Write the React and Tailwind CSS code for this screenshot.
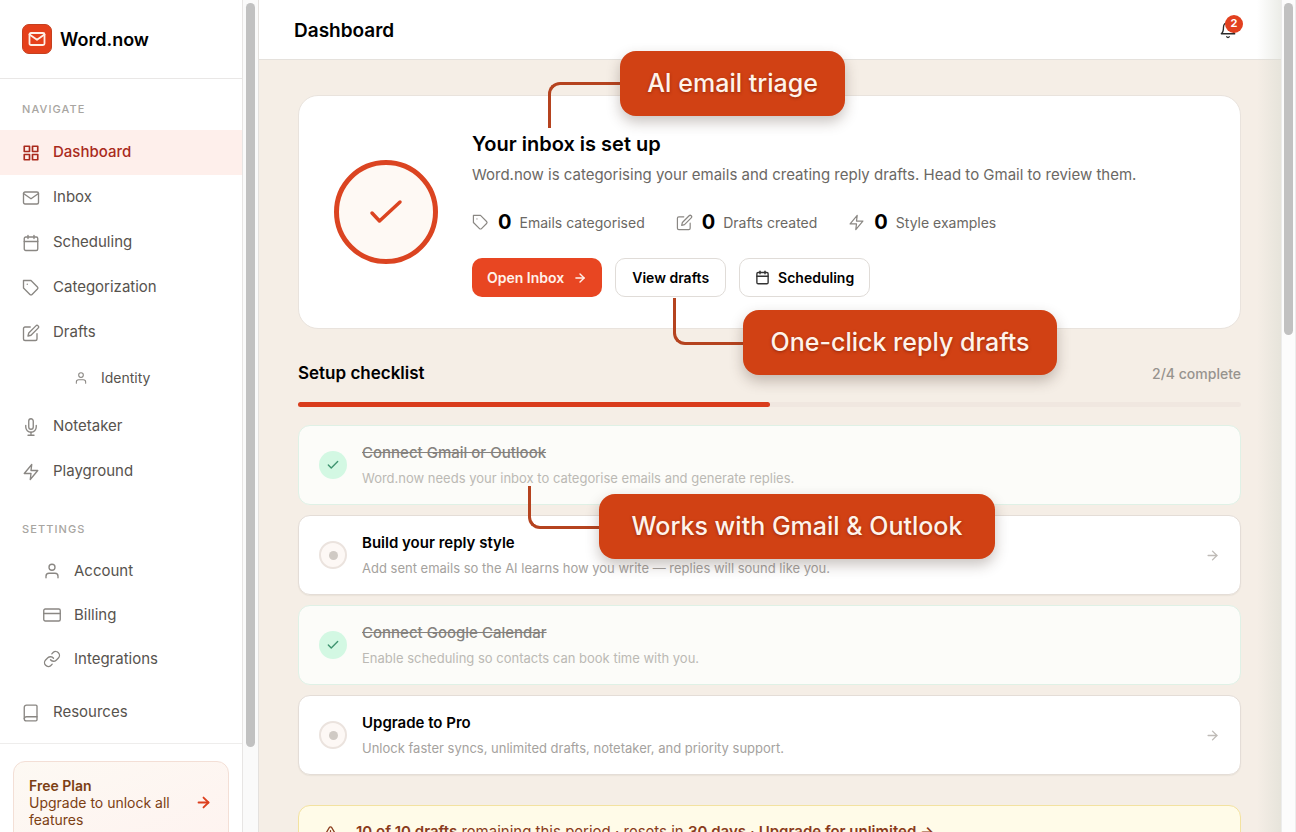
import React from "react";
import {
  FiGrid, FiMail, FiCalendar, FiTag, FiEdit, FiUser, FiMic, FiZap, FiCreditCard,
  FiLink, FiBell, FiAlertTriangle, FiArrowRight, FiCheck,
} from "react-icons/fi";

function BookIcon({ size = 18, strokeWidth = 2, className }) {
  return (
    <svg
      width={size}
      height={size}
      viewBox="0 0 24 24"
      fill="none"
      stroke="currentColor"
      strokeWidth={strokeWidth}
      strokeLinecap="round"
      strokeLinejoin="round"
      className={className}
    >
      <path d="M6 1.500h12.500a1.500 1.500 0 0 1 1.500 1.500v18a1.500 1.500 0 0 1-1.500 1.500H6A3 3 0 0 1 3 19.500v-15a3 3 0 0 1 3-3z" />
      <path d="M3 19.500A3 3 0 0 1 6 17h14" />
    </svg>
  );
}

function NavItem({ icon: Icon, label, active }) {
  return (
    <a
      href="#"
      className={
        active
          ? "flex h-[45px] items-center gap-[13px] bg-[#feefeb] px-[22px] text-[15px] font-medium text-[#a92a1c]"
          : "flex h-[45px] items-center gap-[13px] px-[22px] text-[15px] text-[#57534e]"
      }
    >
      <Icon size={18} strokeWidth={active ? 2.2 : 1.8} className={active ? "" : "text-[#8a8783]"} />
      {label}
    </a>
  );
}

function SubItem({ icon: Icon, label }) {
  return (
    <a href="#" className="flex h-11 items-center gap-[13px] pl-[43px] text-[15px] text-[#57534e]">
      <Icon size={18} strokeWidth={1.8} className="text-[#8a8783]" />
      {label}
    </a>
  );
}

function Stat({ icon: Icon, value, label }) {
  return (
    <div className="flex items-center">
      <Icon size={17} strokeWidth={1.7} className="text-[#8a8783]" />
      <span className="ml-[9px] text-[20px] font-bold text-black">{value}</span>
      <span className="ml-2 text-[14px] text-[#6b6864]">{label}</span>
    </div>
  );
}

function Callout({ children, box, line }) {
  return (
    <>
      <div className={`absolute z-20 border-[#b5431f] ${line}`} />
      <div
        className={`absolute z-20 flex h-[65px] items-center justify-center rounded-2xl bg-[#d14114] text-[25px] font-medium whitespace-nowrap text-[#fff3ea] shadow-[0_6px_14px_rgba(60,40,30,0.28)] ${box}`}
      >
        <span className="[text-shadow:0_1px_3px_rgba(90,20,0,0.5)]">{children}</span>
      </div>
    </>
  );
}

function Task({ title, text, done, children }) {
  return (
    <div
      className={
        done
          ? "relative flex h-20 items-center gap-[15px] rounded-xl border border-[#dff1e6] bg-[#fcfcf9] px-5"
          : "relative flex h-20 items-center gap-[15px] rounded-xl border border-[#e4ddd7] bg-white px-5 shadow-[0_1px_1px_rgba(120,100,80,0.08)]"
      }
    >
      {done ? (
        <span className="flex size-7 shrink-0 items-center justify-center rounded-full bg-[#d3f8e3] text-[#3f9470]">
          <FiCheck size={14} strokeWidth={2.4} />
        </span>
      ) : (
        <span className="flex size-7 shrink-0 items-center justify-center rounded-full border-2 border-[#ebe3de] bg-[#fdf8f5]">
          <span className="size-[9px] rounded-full bg-[#d0cac4]" />
        </span>
      )}
      <div className="flex-1">
        <h3 className={done ? "text-[15px] leading-6 font-medium text-[#85827e] line-through" : "text-[15px] leading-6 font-semibold text-black"}>
          {title}
        </h3>
        <p className={done ? "mt-px text-[13px] leading-6 text-[#bbb9b4]" : "mt-px text-[13px] leading-6 text-[#a5a29e]"}>{text}</p>
      </div>
      {!done && <FiArrowRight size={15} strokeWidth={2.2} className="text-[#bfbbb7]" />}
      {children}
    </div>
  );
}

export default function App() {
  return (
    <div className="flex h-screen overflow-hidden bg-white font-['Inter',sans-serif]">
      <aside className="flex w-[243px] shrink-0 flex-col border-r border-[#e7e5e4] bg-white">
        <div className="flex h-[79px] shrink-0 items-center gap-2 border-b border-[#e9e7e6] px-[22px]">
          <span className="flex size-[30px] items-center justify-center rounded-[7px] border border-[#c5401f] bg-[#e5401b] text-[#fff0e6]">
            <FiMail size={18} strokeWidth={2.4} />
          </span>
          <span className="text-[18px] font-semibold text-black">Word.now</span>
        </div>
        <nav className="shrink-0 border-b border-[#eeedec] pb-2">
          <h2 className="px-[22px] pt-[22px] pb-[13px] text-[11px] leading-4 font-medium tracking-widest text-[#a8a5a1]">NAVIGATE</h2>
          <NavItem icon={FiGrid} label="Dashboard" active />
          <NavItem icon={FiMail} label="Inbox" />
          <NavItem icon={FiCalendar} label="Scheduling" />
          <NavItem icon={FiTag} label="Categorization" />
          <NavItem icon={FiEdit} label="Drafts" />
          <a href="#" className="mb-1 flex h-[45px] items-center gap-[13px] pl-[74px] text-[14px] text-[#57534e]">
            <FiUser size={14} strokeWidth={1.8} className="text-[#8a8783]" />
            Identity
          </a>
          <NavItem icon={FiMic} label="Notetaker" />
          <NavItem icon={FiZap} label="Playground" />
          <h2 className="px-[22px] pt-[27px] pb-3 text-[11px] leading-4 font-medium tracking-widest text-[#a8a5a1]">SETTINGS</h2>
          <SubItem icon={FiUser} label="Account" />
          <SubItem icon={FiCreditCard} label="Billing" />
          <div className="mb-[9px]">
            <SubItem icon={FiLink} label="Integrations" />
          </div>
          <NavItem icon={BookIcon} label="Resources" />
        </nav>
        <a
          href="#"
          className="mx-[13px] mt-[17px] flex shrink-0 items-center justify-between rounded-xl border border-[#f3dfd6] bg-gradient-to-br from-[#fdf9f3] to-[#fef3f0] py-[15px] pr-4 pl-[15px] text-[14px] leading-[17px] text-[#7c3f14]"
        >
          <span>
            <strong className="block font-semibold">Free Plan</strong>
            Upgrade to unlock all
            <br />
            features
          </span>
          <FiArrowRight size={17} strokeWidth={2.6} className="text-[#dc3f1e]" />
        </a>
      </aside>
      <div className="w-[15px] shrink-0 bg-[#fafafa] px-[3px] pt-[3px]">
        <div className="h-[744px] rounded-full bg-[#c1c1c1]" />
      </div>

      <main className="relative flex min-w-0 flex-1 flex-col border-l border-[#e4e1de] bg-[#f5eee6]">
        <header className="flex h-[60px] shrink-0 items-center justify-between border-b border-[#e5e1dc] bg-white pr-11 pl-[35px]">
          <h1 className="pt-[3px] text-[19px] font-semibold text-black">Dashboard</h1>
          <button aria-label="Notifications" className="relative text-[#2b2b2b]">
            <FiBell size={18} strokeWidth={1.8} />
            <span className="absolute -top-[6px] left-[6px] flex size-[18px] items-center justify-center rounded-full bg-[#e2401f] text-[11px] font-bold text-white">
              2
            </span>
          </button>
        </header>
        <div className="pointer-events-none absolute inset-y-0 right-0 w-6 bg-gradient-to-r from-transparent to-[#d8dad0]/50" />

        <div className="pt-[35px] pr-10 pl-[39px]">
          <section className="relative flex items-center gap-[34px] rounded-[20px] border border-[#e9e3dd] bg-white px-[35px] py-[31px]">
            <div className="flex size-[104px] shrink-0 items-center justify-center rounded-full border-[5px] border-[#db4421] bg-[#fef9f4] text-[#db4421]">
              <svg width="34" height="26" viewBox="0 0 34 26" fill="none" stroke="currentColor" strokeWidth="3.500" strokeLinecap="round" strokeLinejoin="round">
                <path d="M3 14l7.500 8L31 3" />
              </svg>
            </div>
            <div>
              <h2 className="text-[20px] leading-[34px] font-semibold text-black">Your inbox is set up</h2>
              <p className="mt-0.5 text-[15px] leading-6 text-[#6b6864]">
                Word.now is categorising your emails and creating reply drafts. Head to Gmail to review them.
              </p>
              <div className="mt-[21px] flex h-7 items-center gap-[31px]">
                <Stat icon={FiTag} value="0" label="Emails categorised" />
                <Stat icon={FiEdit} value="0" label="Drafts created" />
                <Stat icon={FiZap} value="0" label="Style examples" />
              </div>
              <div className="mt-[22px] flex gap-[13px] text-[14px] font-semibold text-black">
                <button className="flex h-[39px] items-center gap-[9px] rounded-[10px] bg-[#e84622] px-[15px] text-[#fff1ea]">
                  Open Inbox
                  <FiArrowRight size={14} strokeWidth={2.4} />
                </button>
                <button className="h-[39px] rounded-[10px] border border-[#e0dcd8] bg-white px-4">View drafts</button>
                <button className="flex h-[39px] items-center gap-2 rounded-[10px] border border-[#e0dcd8] bg-white px-[15px]">
                  <FiCalendar size={15} strokeWidth={2.2} className="text-[#333]" />
                  Scheduling
                </button>
              </div>
            </div>
            <Callout box="left-[321px] top-[-45px] w-[225px]" line="left-[249px] top-[-14px] h-[46px] w-[73px] rounded-tl-xl border-t-[3px] border-l-[3px]">
              AI email triage
            </Callout>
            <Callout box="left-[444px] top-[214px] w-[314px]" line="left-[374px] top-[202px] h-[47px] w-[71px] rounded-bl-xl border-b-[3px] border-l-[3px]">
              One-click reply drafts
            </Callout>
          </section>

          <section>
            <div className="mt-8 flex items-center justify-between">
              <h2 className="text-[17px] leading-6 font-semibold text-black">Setup checklist</h2>
              <span className="text-[14px] font-medium text-[#97938e]">2/4 complete</span>
            </div>
            <div className="mt-[17px] h-[5px] rounded-full bg-[#f0e7e0]">
              <div className="h-full w-1/2 rounded-full bg-[#d93c1c]" />
            </div>
            <div className="mt-[18px] flex flex-col gap-[10px]">
              <Task done title="Connect Gmail or Outlook" text="Word.now needs your inbox to categorise emails and generate replies.">
                <Callout box="left-[300px] top-[68px] w-[396px]" line="left-[229px] top-[60px] h-[43px] w-[72px] rounded-bl-xl border-b-[3px] border-l-[3px]">
                  Works with Gmail &amp; Outlook
                </Callout>
              </Task>
              <Task title="Build your reply style" text="Add sent emails so the AI learns how you write — replies will sound like you." />
              <Task done title="Connect Google Calendar" text="Enable scheduling so contacts can book time with you." />
              <Task title="Upgrade to Pro" text="Unlock faster syncs, unlimited drafts, notetaker, and priority support." />
            </div>
            <a href="#" className="mt-[30px] flex h-[54px] items-center gap-[18px] rounded-xl border border-[#f3e2a0] bg-[#fffbe8] px-6 text-[15px] text-[#8a3b1c]">
              <FiAlertTriangle size={15} strokeWidth={2} className="shrink-0" />
              <span>
                <strong className="font-semibold">10 of 10 drafts</strong> remaining this period · resets in{" "}
                <strong className="font-semibold">30 days</strong> · <strong className="font-semibold">Upgrade for unlimited →</strong>
              </span>
            </a>
          </section>
        </div>
      </main>
      <div className="w-[15px] shrink-0 border-x border-[#ececec] bg-[#fcfcfc] px-[2px] pt-[3px]">
        <div className="h-[332px] rounded-full bg-[#c1c1c1]" />
      </div>
    </div>
  );
}
